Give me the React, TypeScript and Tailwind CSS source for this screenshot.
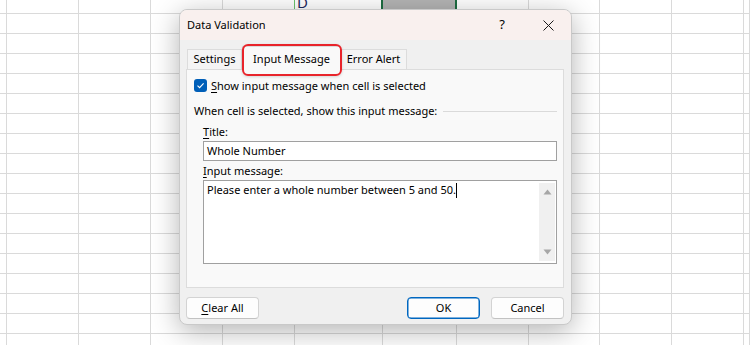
import React from "react";

const COLS = 12;
const ROWS = 18;

function Sheet() {
  const cells: React.ReactNode[] = [];
  for (let r = 0; r < ROWS; r++) {
    for (let c = 0; c < COLS; c++) {
      let extra = "";
      let content: React.ReactNode = null;
      if (r === 0 && c === 4) extra = " border-r-[#6cc46c]";
      if (r === 0 && c === 5) {
        extra = " border-r-2 border-r-[#1e6e42]";
        content = (
          <span className="block pl-[2px] -mt-[5px] text-[15px] leading-[14px] text-[#1f2a60]">D</span>
        );
      }
      if (r === 0 && c === 6) extra = " bg-[#b4b4b4] border-r-2 border-r-[#1e6e42]";
      cells.push(
        <div key={`${r}-${c}`} className={"border-b border-r border-[#dadada] overflow-hidden" + extra}>
          {content}
        </div>
      );
    }
  }
  return (
    <div className="grid grid-cols-[7px_72px_72px_72px_72px_88px_74px_72px_71px_72px_72px_1fr] grid-rows-[14px_repeat(17,20px)]">
      {cells}
    </div>
  );
}

function U({ children }: { children: React.ReactNode }) {
  return <span className="underline underline-offset-2 decoration-1">{children}</span>;
}

function Btn({ children, primary }: { children: React.ReactNode; primary?: boolean }) {
  return (
    <div
      className={
        "w-[73px] h-[22px] rounded-[4px] bg-[#fdfdfd] flex items-center justify-center text-[11px] text-black " +
        (primary
          ? "border border-[#0067c0] shadow-[inset_0_0_0_0.5px_#0067c0]"
          : "border border-[#d3d3d3] border-b-[#c2c2c2]")
      }
    >
      {children}
    </div>
  );
}

function Dialog() {
  return (
    <div className="absolute left-[179px] top-[9px] w-[393px] h-[316px] rounded-[8px] border border-[#c9c9c9] bg-[#f0f0f0] overflow-hidden shadow-[0_6px_28px_rgba(0,0,0,0.3)] flex flex-col">
      {/* title bar */}
      <div className="h-[30px] shrink-0 bg-[#f9f0ee] flex items-center">
        <div className="pl-[7px] flex-1 text-[11px] text-black">Data Validation</div>
        <div className="w-[46px] h-full flex items-center justify-center text-[13px] text-black">?</div>
        <div className="w-[46px] h-full flex items-center justify-center">
          <svg width="11" height="11" viewBox="0 0 11 11">
            <path d="M0.5 0.5 L10.5 10.5 M10.5 0.5 L0.5 10.5" stroke="#1a1a1a" strokeWidth="1" />
          </svg>
        </div>
      </div>

      {/* body */}
      <div className="flex-1 flex flex-col pt-[6px] pl-[6px] pr-[7px] pb-[6px]">
        {/* tabs */}
        <div className="relative z-10 h-[24px] -mb-[1px] flex items-end text-[11px] text-black">
          <div className="ml-[1px] w-[55px] h-[21px] border border-[#dcdcdc] bg-[#f4f4f4] flex items-center justify-center">
            Settings
          </div>
          <div className="relative w-[99px] h-[24px] border border-b-0 border-[#dcdcdc] bg-[#f9f9f9] flex items-center justify-center pt-[2px]">
            Input Message
            <div className="absolute -left-[1px] -right-[2px] -top-[3px] -bottom-[6px] border-2 border-[#e8242b] rounded-[6px] shadow-[0_1px_3px_rgba(0,0,0,0.15)]" />
          </div>
          <div className="w-[66px] h-[21px] border border-l-0 border-[#dcdcdc] bg-[#f4f4f4] flex items-center justify-center">
            Error Alert
          </div>
        </div>

        {/* panel */}
        <div className="h-[219px] border border-[#dcdcdc] bg-[#f9f9f9] pl-[7px] pr-[6px] text-[11px] text-black flex flex-col">
          <div className="mt-[9px] h-[13px] flex items-center gap-[4px]">
            <div className="w-[13px] h-[13px] rounded-[3px] bg-[#005fb8] flex items-center justify-center">
              <svg width="9" height="9" viewBox="0 0 9 9">
                <path d="M1.5 4.6 L3.6 6.6 L7.6 2.4" fill="none" stroke="#ffffff" strokeWidth="1.1" />
              </svg>
            </div>
            <span className="leading-[16px]">
              <U>S</U>how input message when cell is selected
            </span>
          </div>

          <div className="mt-[11px] h-[16px] flex items-center gap-[6px]">
            <span className="leading-[16px] whitespace-nowrap">When cell is selected, show this input message:</span>
            <div className="flex-1 h-px bg-[#dadada]" />
          </div>

          <div className="pl-[9px] flex flex-col">
            <div className="mt-[5px] h-[16px] leading-[16px]">
              <U>T</U>itle:
            </div>
            <div className="mt-px h-[20px] border border-[#a0a0a0] bg-white flex items-center pl-[3px]">
              Whole Number
            </div>
            <div className="mt-[2px] h-[16px] leading-[16px]">
              <U>I</U>nput message:
            </div>
            <div className="mt-px h-[84px] border border-[#a0a0a0] bg-white flex">
              <div className="flex-1 pl-[3px] pt-px leading-[16px] flex items-start">
                <span>Please enter a whole number between 5 and 50.</span>
                <span className="inline-block w-px h-[15px] bg-black mt-px" />
              </div>
              <div className="mt-[2px] mb-[2px] mr-px w-[16px] bg-[#f0f0f0] flex flex-col items-center justify-between py-[6px]">
                <svg width="9" height="6" viewBox="0 0 9 6">
                  <path d="M4.5 0.5 L8.5 5.5 L0.5 5.5 Z" fill="#a6a6a6" />
                </svg>
                <svg width="9" height="6" viewBox="0 0 9 6">
                  <path d="M0.5 0.5 L8.5 0.5 L4.5 5.5 Z" fill="#a6a6a6" />
                </svg>
              </div>
            </div>
          </div>
        </div>

        {/* buttons */}
        <div className="mt-[9px] flex items-center">
          <Btn>
            <U>C</U>lear All
          </Btn>
          <div className="flex-1" />
          <Btn primary>OK</Btn>
          <div className="w-[11px]" />
          <Btn>Cancel</Btn>
        </div>
      </div>
    </div>
  );
}

export default function App() {
  return (
    <div className="relative w-[750px] h-[345px] overflow-hidden bg-white font-['Noto_Sans','Open_Sans',sans-serif]">
      <Sheet />
      <Dialog />
    </div>
  );
}
